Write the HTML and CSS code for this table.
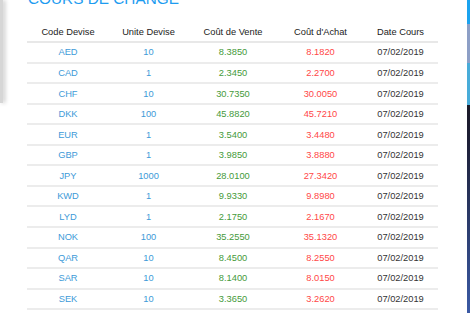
FILE: index.html
```html
<!DOCTYPE html>
<html lang="fr">
<head>
    <meta charset="UTF-8">
    <meta name="viewport" content="width=device-width, initial-scale=1.0">
    <title>Cours de change</title>
    <link rel="stylesheet" href="styles.css">
</head>
<body>
    <div class="edge-left"></div>

    <div class="main">
        <h2 class="title">Cours de change</h2>

        <table class="rates">
            <colgroup>
                <col class="c-code">
                <col class="c-unit">
                <col class="c-sale">
                <col class="c-buy">
                <col class="c-date">
            </colgroup>
            <thead>
                <tr>
                    <th>Code Devise</th>
                    <th>Unite Devise</th>
                    <th>Coût de Vente</th>
                    <th>Coût d'Achat</th>
                    <th>Date Cours</th>
                </tr>
            </thead>
            <tbody>
                <tr><td class="code">AED</td><td class="unit">10</td><td class="sale">8.3850</td><td class="buy">8.1820</td><td class="date">07/02/2019</td></tr>
                <tr><td class="code">CAD</td><td class="unit">1</td><td class="sale">2.3450</td><td class="buy">2.2700</td><td class="date">07/02/2019</td></tr>
                <tr><td class="code">CHF</td><td class="unit">10</td><td class="sale">30.7350</td><td class="buy">30.0050</td><td class="date">07/02/2019</td></tr>
                <tr><td class="code">DKK</td><td class="unit">100</td><td class="sale">45.8820</td><td class="buy">45.7210</td><td class="date">07/02/2019</td></tr>
                <tr><td class="code">EUR</td><td class="unit">1</td><td class="sale">3.5400</td><td class="buy">3.4480</td><td class="date">07/02/2019</td></tr>
                <tr><td class="code">GBP</td><td class="unit">1</td><td class="sale">3.9850</td><td class="buy">3.8880</td><td class="date">07/02/2019</td></tr>
                <tr><td class="code">JPY</td><td class="unit">1000</td><td class="sale">28.0100</td><td class="buy">27.3420</td><td class="date">07/02/2019</td></tr>
                <tr><td class="code">KWD</td><td class="unit">1</td><td class="sale">9.9330</td><td class="buy">9.8980</td><td class="date">07/02/2019</td></tr>
                <tr><td class="code">LYD</td><td class="unit">1</td><td class="sale">2.1750</td><td class="buy">2.1670</td><td class="date">07/02/2019</td></tr>
                <tr><td class="code">NOK</td><td class="unit">100</td><td class="sale">35.2550</td><td class="buy">35.1320</td><td class="date">07/02/2019</td></tr>
                <tr><td class="code">QAR</td><td class="unit">10</td><td class="sale">8.4500</td><td class="buy">8.2550</td><td class="date">07/02/2019</td></tr>
                <tr><td class="code">SAR</td><td class="unit">10</td><td class="sale">8.1400</td><td class="buy">8.0150</td><td class="date">07/02/2019</td></tr>
                <tr><td class="code">SEK</td><td class="unit">10</td><td class="sale">3.3650</td><td class="buy">3.2620</td><td class="date">07/02/2019</td></tr>
            </tbody>
        </table>
    </div>

    <div class="edge-right"></div>
</body>
</html>
```

FILE: styles.css
```css
html, body {
    margin: 0;
    padding: 0;
    height: 100%;
    overflow: hidden;
}
body {
    font-family: 'Liberation Sans', Arial, sans-serif;
    background: white;
    display: flex;
    align-items: flex-start;
}
.edge-left {
    width: 3px;
    height: 103px;
    flex-shrink: 0;
    background: #d6d6d6;
    box-shadow: 2px 0 4px rgba(0,0,0,0.25);
}
.main {
    flex: 1;
    min-width: 0;
    padding-left: 24px;
}
.title {
    margin: -9.3px 0 16.8px 1px;
    font-size: 15.35px;
    line-height: 15px;
    font-weight: normal;
    text-transform: uppercase;
    color: #1e9cf0;
}
.rates {
    width: 411px;
    border-collapse: separate;
    border-spacing: 0;
    table-layout: fixed;
    font-size: 9.3px;
}
.c-code { width: 82px; }
.c-unit { width: 79px; }
.c-sale { width: 90px; }
.c-buy { width: 85px; }
.c-date { width: 75px; }
.rates th {
    height: 18.7px;
    padding: 0;
    font-weight: normal;
    color: #222;
    text-align: center;
    border-bottom: 2px solid #e8e8e8;
}
.rates td {
    height: 18.54px;
    padding: 0;
    text-align: center;
    border-bottom: 2px solid #ececec;
}
.code, .unit {
    color: #3d9ad8;
}
.sale {
    color: #459a3a;
}
.buy {
    color: #ff4747;
}
.date {
    color: #333;
}
.edge-right {
    width: 3px;
    height: 313px;
    flex-shrink: 0;
    background: linear-gradient(180deg,
        #1ba3ef 0px, #1ba3ef 24px,
        #8d9fc6 24px, #8d9fc6 63px,
        #48acd9 63px, #48acd9 105px,
        #1b1a28 105px, #1d1f36 140px,
        #3b5aa5 313px);
}
```
